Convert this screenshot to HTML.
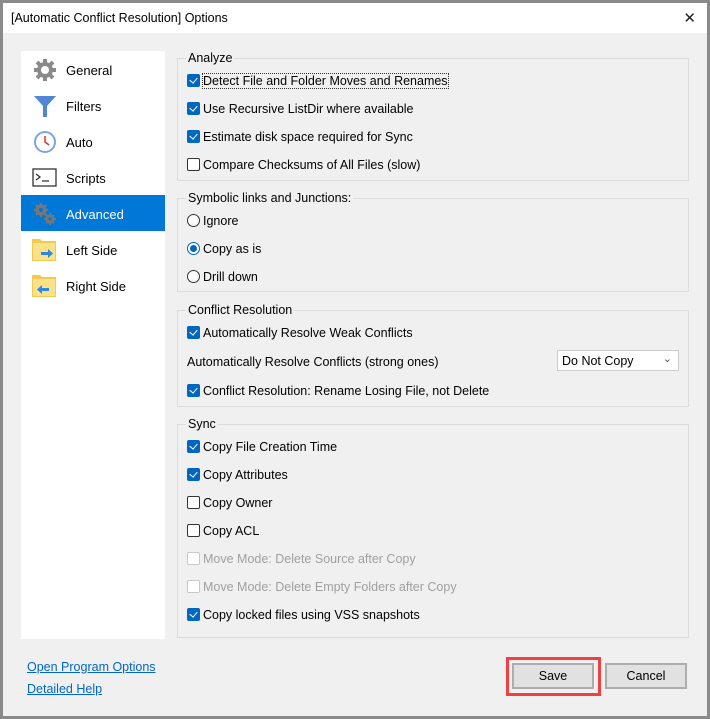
<!DOCTYPE html>
<html><head><style>
*{box-sizing:border-box;margin:0;padding:0}
body{width:710px;height:719px;background:#8a8a8a;font-family:"Liberation Sans",sans-serif;font-size:12.5px;color:#000;overflow:hidden;position:relative}
.win{position:absolute;left:3px;top:3px;width:704px;height:713px;background:#f0f0f0}
.title{position:absolute;left:0;top:0;width:704px;height:30px;background:#fff;font-size:12.5px}
.title span{position:absolute;left:8px;top:8px}
.close{position:absolute;right:11px;top:6px;font-size:15px;color:#222}
.abs{position:absolute}
.side{position:absolute;left:18px;top:48px;width:144px;height:588px;background:#fff}
.item{position:absolute;left:0;width:144px;height:36px}
.item span{position:absolute;left:45px;top:12px;font-size:13px}
.item.sel{background:#0078d7;color:#fff}
.item svg{position:absolute;left:11px;top:6px}
.grp{position:absolute;left:174px;width:512px;border:1px solid #dcdcdc}
.gt{position:absolute;left:8px;top:-8px;background:#f0f0f0;padding:0 2px;font-size:12.5px}
.row{position:absolute;left:184px;font-size:12.5px;line-height:14px}
.cb{display:inline-block;width:13px;height:13px;border:1px solid #333;background:#fff;vertical-align:-2px;margin-right:3px;border-radius:2px;position:relative}
.cb.on{background:#0067c0;border-color:#0067c0}
.cb.on:after{content:"";position:absolute;left:3px;top:1px;width:4px;height:6px;border:solid #fff;border-width:0 1.5px 1.5px 0;transform:rotate(40deg)}
.cb.dis{border-color:#c8c8c8}
.dis{color:#a0a0a0}
.rb{display:inline-block;width:13px;height:13px;border:1px solid #333;border-radius:50%;background:#fff;vertical-align:-2px;margin-right:3px;position:relative}
.rb.on{border-color:#0067c0}
.rb.on:after{content:"";position:absolute;left:2px;top:2px;width:7px;height:7px;border-radius:50%;background:#0067c0}
.link{position:absolute;left:24px;color:#0066cc;text-decoration:underline;font-size:12.5px}
.btn{position:absolute;top:660px;width:82px;height:26px;border:2px solid #adadad;background:#e1e1e1;text-align:center;line-height:22px;font-size:12.5px}
</style></head><body>
<div class="win">
<div class="title"><span>[Automatic Conflict Resolution] Options</span><div class="close">✕</div></div>
<div class="side">
 <div class="item" style="top:0"><svg width="26" height="26" viewBox="0 0 26 26"><g fill="#8a8a8a"><circle cx="13" cy="13" r="8"/><g stroke="#8a8a8a" stroke-width="4"><path d="M13 2v22M2 13h22M5 5l16 16M21 5L5 21"/></g></g><circle cx="13" cy="13" r="4" fill="#fff"/></svg><span>General</span></div>
 <div class="item" style="top:36px"><svg width="26" height="26"><path d="M2 3h22l-9 10v11h-4V13z" fill="#4f86d6"/></svg><span>Filters</span></div>
 <div class="item" style="top:72px"><svg width="26" height="26"><circle cx="13" cy="13" r="11" fill="#7aa6e0"/><circle cx="13" cy="13" r="9" fill="#fff"/><path d="M13 7v6l4 3" stroke="#d33" stroke-width="1.5" fill="none"/></svg><span>Auto</span></div>
 <div class="item" style="top:108px"><svg width="26" height="26"><rect x="1" y="4" width="23" height="17" fill="#fff" stroke="#333" stroke-width="1.3"/><path d="M4 9l4 3-4 3M10 16h7" stroke="#333" stroke-width="1.3" fill="none"/></svg><span>Scripts</span></div>
 <div class="item sel" style="top:144px"><svg width="26" height="26"><g fill="#777" stroke="#777" stroke-width="3"><circle cx="9" cy="9" r="4"/><path d="M9 2v14M2 9h14M4 4l10 10M14 4L4 14" stroke-width="2.5"/><circle cx="18" cy="18" r="3"/><path d="M18 12v12M12 18h12M14 14l8 8M22 14l-8 8" stroke-width="2"/></g><circle cx="9" cy="9" r="2" fill="#0078d7"/><circle cx="18" cy="18" r="1.5" fill="#0078d7"/></svg><span>Advanced</span></div>
 <div class="item" style="top:180px"><svg width="26" height="26"><path d="M0 2h8l2 2h14v20H0z" fill="#f4c94f"/><rect x="1" y="6" width="22" height="17" fill="#fbe18a"/><path d="M9 15h7v-3l5 4.5-5 4.5v-3H9z" fill="#2b8ae0"/></svg><span>Left Side</span></div>
 <div class="item" style="top:216px"><svg width="26" height="26"><path d="M0 2h8l2 2h14v20H0z" fill="#f4c94f"/><rect x="1" y="6" width="22" height="17" fill="#fbe18a"/><path d="M17 15h-7v-3l-5 4.5 5 4.5v-3h7z" fill="#2b8ae0"/></svg><span>Right Side</span></div>
</div>

<div class="grp" style="top:55px;height:123px"><div class="gt">Analyze</div></div>
<div class="row" style="top:71px"><span class="cb on"></span><span style="outline:1px dotted #333">Detect File and Folder Moves and Renames</span></div>
<div class="row" style="top:99px"><span class="cb on"></span>Use Recursive ListDir where available</div>
<div class="row" style="top:127px"><span class="cb on"></span>Estimate disk space required for Sync</div>
<div class="row" style="top:155px"><span class="cb"></span>Compare Checksums of All Files (slow)</div>

<div class="grp" style="top:195px;height:94px"><div class="gt">Symbolic links and Junctions:</div></div>
<div class="row" style="top:211px"><span class="rb"></span>Ignore</div>
<div class="row" style="top:239px"><span class="rb on"></span>Copy as is</div>
<div class="row" style="top:267px"><span class="rb"></span>Drill down</div>

<div class="grp" style="top:307px;height:97px"><div class="gt">Conflict Resolution</div></div>
<div class="row" style="top:323px"><span class="cb on"></span>Automatically Resolve Weak Conflicts</div>
<div class="row" style="top:352px">Automatically Resolve Conflicts (strong ones)</div>
<div class="abs" style="left:554px;top:347px;width:122px;height:21px;background:#fff;border:1px solid #ccc;font-size:12.5px;padding:3px 4px">Do Not Copy<span style="position:absolute;right:6px;top:1px;color:#555;font-size:11px">&#8964;</span></div>
<div class="row" style="top:381px"><span class="cb on"></span>Conflict Resolution: Rename Losing File, not Delete</div>

<div class="grp" style="top:421px;height:214px"><div class="gt">Sync</div></div>
<div class="row" style="top:437px"><span class="cb on"></span>Copy File Creation Time</div>
<div class="row" style="top:465px"><span class="cb on"></span>Copy Attributes</div>
<div class="row" style="top:493px"><span class="cb"></span>Copy Owner</div>
<div class="row" style="top:521px"><span class="cb"></span>Copy ACL</div>
<div class="row dis" style="top:549px"><span class="cb dis"></span>Move Mode: Delete Source after Copy</div>
<div class="row dis" style="top:577px"><span class="cb dis"></span>Move Mode: Delete Empty Folders after Copy</div>
<div class="row" style="top:605px"><span class="cb on"></span>Copy locked files using VSS snapshots</div>

<div class="link" style="top:657px">Open Program Options</div>
<div class="link" style="top:679px">Detailed Help</div>

<div class="abs" style="left:503px;top:654px;width:95px;height:39px;border:3px solid #f04040"></div>
<div class="btn" style="left:509px">Save</div>
<div class="btn" style="left:602px">Cancel</div>
</div>
</body></html>
